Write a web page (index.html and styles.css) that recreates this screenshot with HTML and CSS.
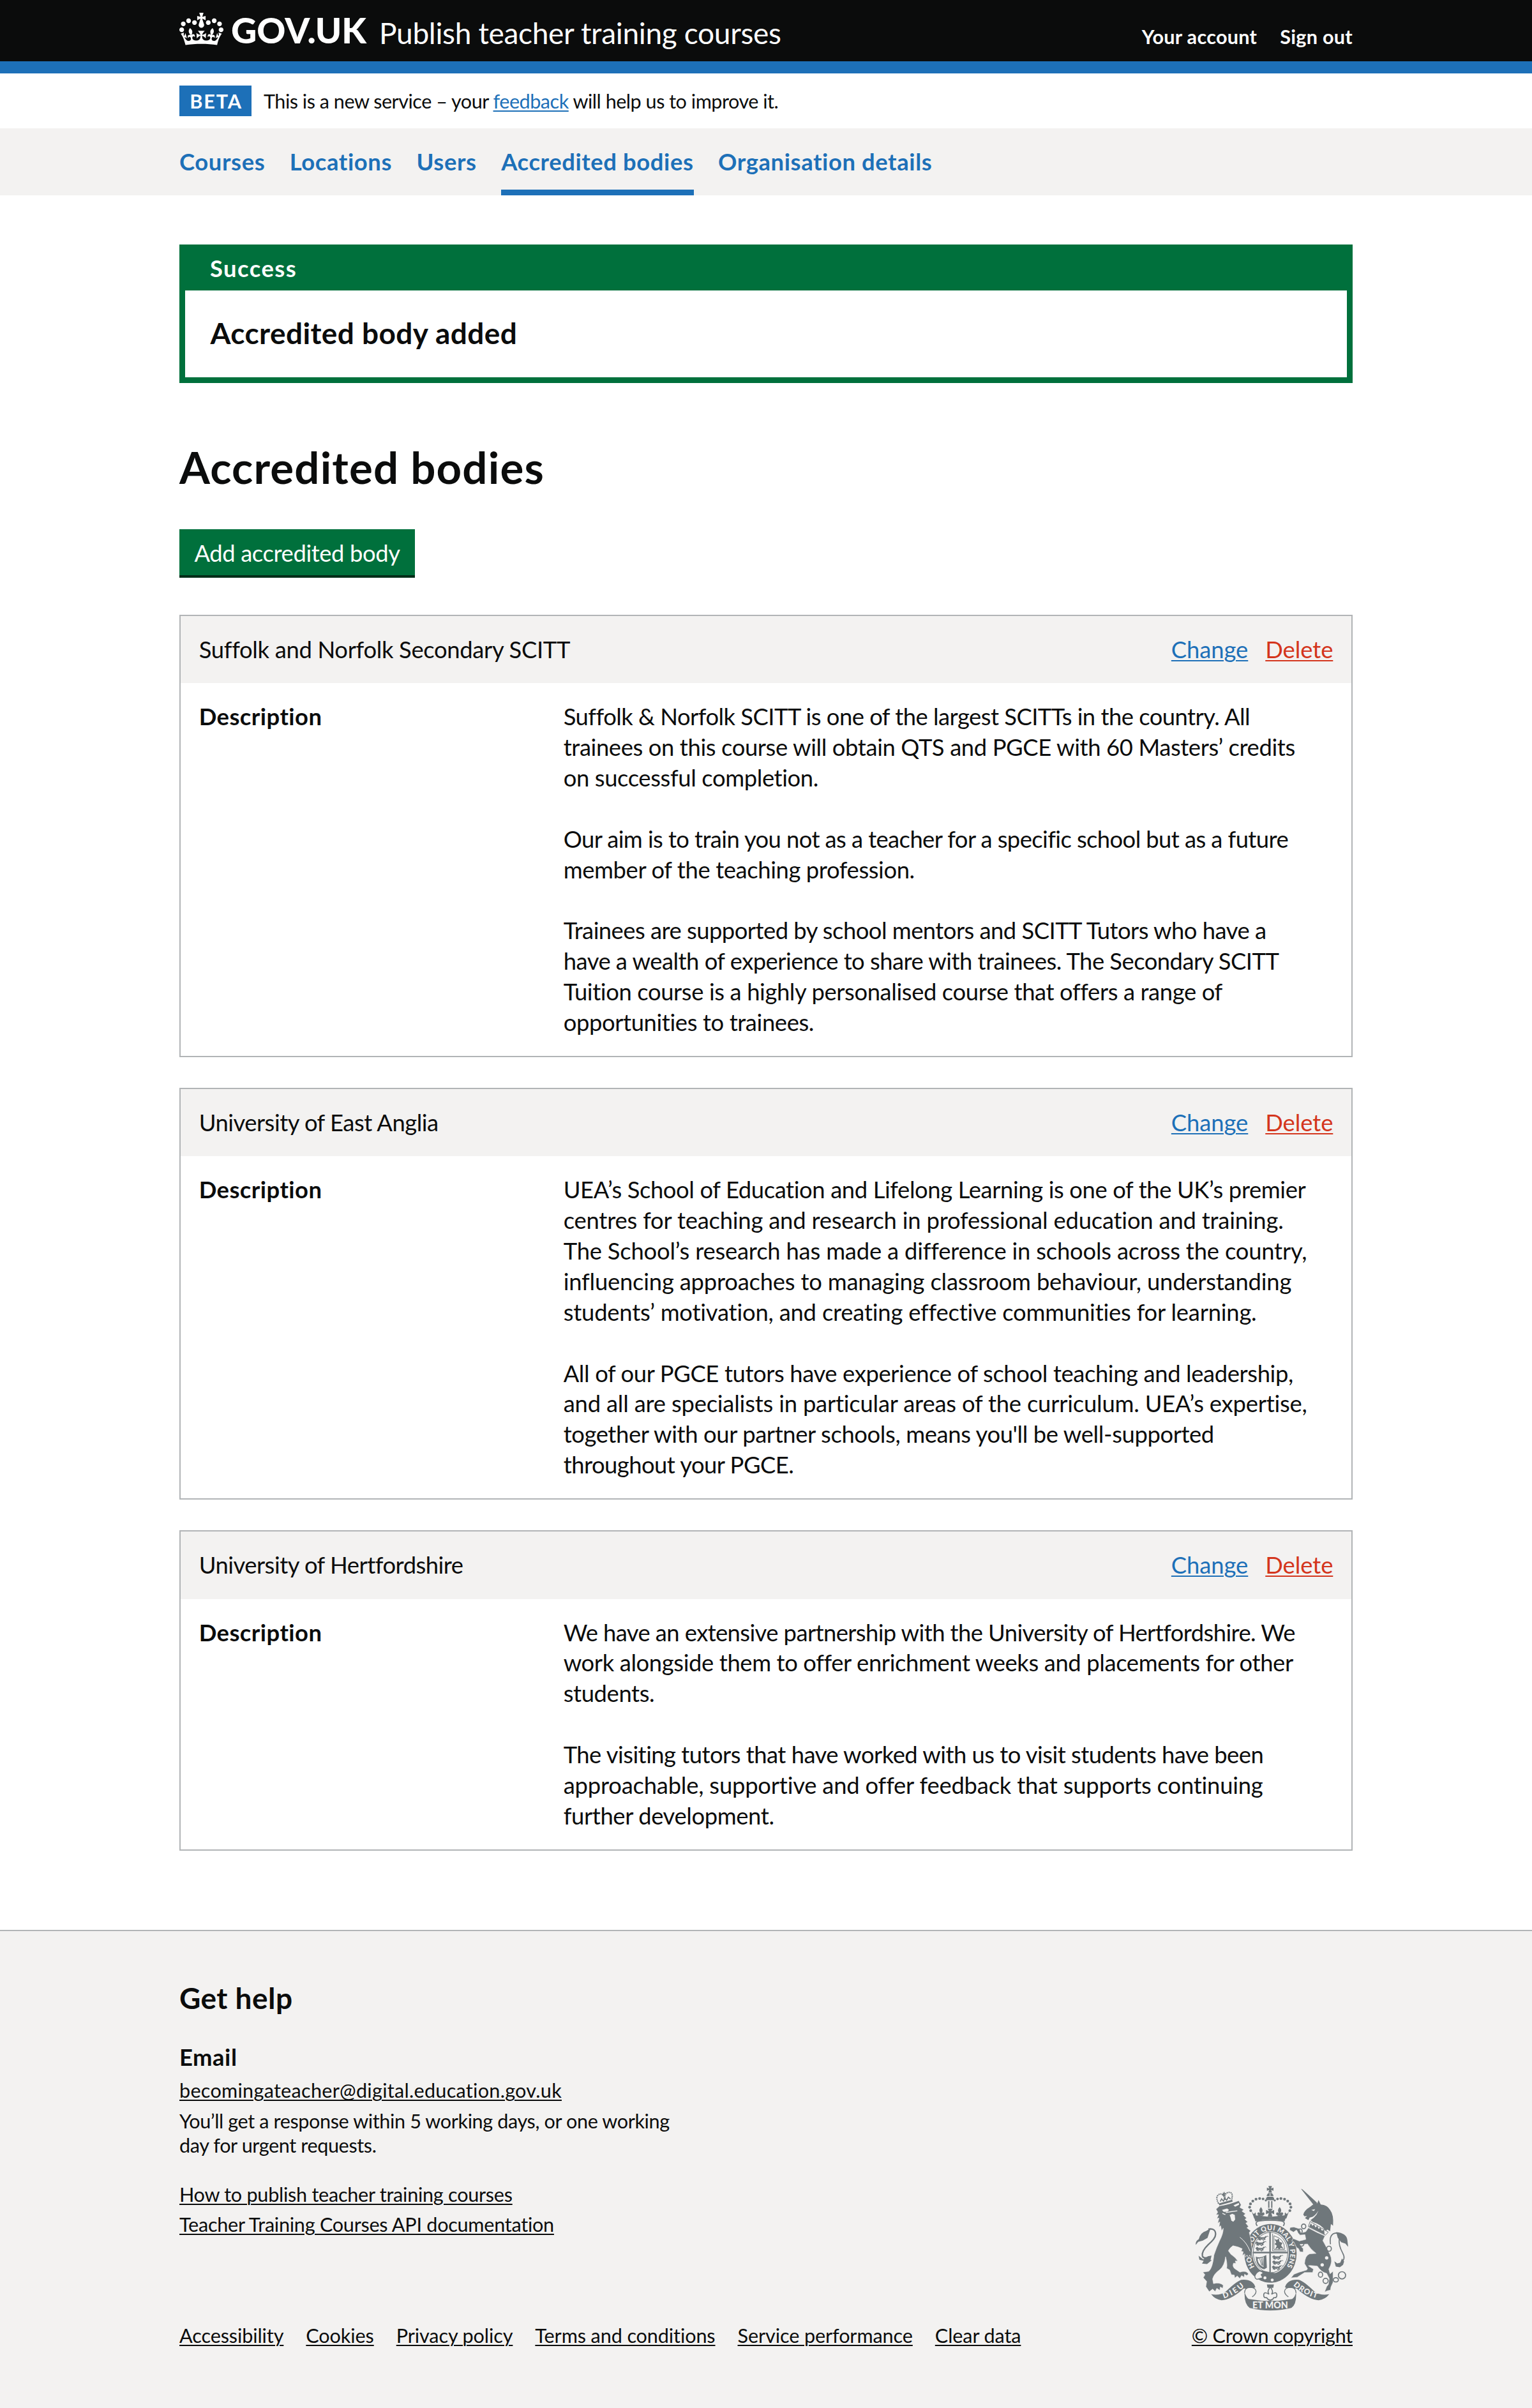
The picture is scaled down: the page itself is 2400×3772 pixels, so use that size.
FILE: index.html
```html
<!DOCTYPE html>
<html lang="en">
<head>
<meta charset="utf-8">
<title>Accredited bodies - Publish teacher training courses</title>
<link rel="stylesheet" href="styles.css">
</head>
<body>
<header class="header">
  <div class="container header-inner">
    <svg class="logo" viewBox="0 0 302 60" role="img" aria-label="GOV.UK">
      <svg x="0" y="0" width="69" height="51" viewBox="0 0 132 97" preserveAspectRatio="none">
        <path fill="#fff" fill-rule="evenodd" d="M25 30.2c3.5 1.5 7.7-.2 9.1-3.7 1.5-3.6-.2-7.8-3.9-9.2-3.6-1.4-7.6.3-9.1 3.9-1.4 3.5.3 7.5 3.9 9zM9 39.5c3.6 1.5 7.8-.2 9.2-3.7 1.5-3.6-.2-7.8-3.9-9.1-3.6-1.5-7.6.2-9.1 3.8-1.4 3.5.3 7.5 3.8 9zM4.4 57.2c3.5 1.5 7.7-.2 9.1-3.8 1.5-3.6-.2-7.7-3.9-9.1-3.5-1.5-7.6.3-9.1 3.8-1.4 3.5.3 7.6 3.9 9.1zm38.3-21.4c3.5 1.5 7.7-.2 9.1-3.8 1.5-3.6-.2-7.7-3.9-9.1-3.6-1.5-7.6.3-9.1 3.8-1.3 3.6.4 7.7 3.9 9.1zm64.4-5.6c-3.6 1.5-7.8-.2-9.1-3.7-1.5-3.6.2-7.8 3.8-9.2 3.6-1.4 7.7.3 9.2 3.9 1.3 3.5-.4 7.5-3.9 9zm15.9 9.3c-3.6 1.5-7.7-.2-9.1-3.7-1.5-3.6.2-7.8 3.7-9.1 3.6-1.5 7.7.2 9.2 3.8 1.5 3.5-.3 7.5-3.8 9zm4.7 17.7c-3.6 1.5-7.8-.2-9.2-3.8-1.5-3.6.2-7.7 3.9-9.1 3.6-1.5 7.7.3 9.2 3.8 1.3 3.5-.4 7.6-3.9 9.1zM89.3 35.8c-3.6 1.5-7.8-.2-9.2-3.8-1.4-3.6.2-7.7 3.9-9.1 3.6-1.5 7.7.3 9.2 3.8 1.4 3.6-.3 7.7-3.9 9.1zM69.7 17.7l8.9 4.7V9.3l-8.9 2.8c-.2-.3-.5-.6-.9-.9L72.4 0H59.6l3.5 11.2c-.3.3-.6.5-.9.9l-8.8-2.8v13.1l8.8-4.7c.3.3.6.7.9.9l-5 15.4v.1c-.2.8-.4 1.6-.4 2.4 0 4.1 3.1 7.5 7 8.1h.2c.3 0 .7.1 1 .1.4 0 .7 0 1-.1h.2c4-.6 7.1-4.1 7.1-8.1 0-.8-.1-1.7-.4-2.4V34l-5.1-15.4c.4-.2.7-.6 1-.9zM66 92.8c16.9 0 32.8 1.1 47.1 3.2 4-16.9 8.9-26.7 14-33.5l-9.6-3.4c1 4.9 1.1 7.2 0 10.2-1.5-1.4-3-4.3-4.2-8.7L108.6 76c2.8-2 5-3.2 7.5-3.3-4.4 9.4-10 11.9-13.6 11.2-4.3-.8-6.3-4.6-5.6-7.9 1-4.7 5.7-5.9 8-.5 4.3-8.7-3-11.4-7.6-8.8 7.1-7.2 7.9-13.5 2.1-21.1-8 6.1-8.1 12.3-4.5 20.8-4.7-5.4-12.1-2.5-9.5 6.2 3.4-5.2 7.9-2 7.2 3.1-.6 4.3-6.4 7.8-13.5 7.2-10.3-.9-10.9-8-11.2-13.8 2.5-.5 7.1 1.8 11 7.3L80.2 60c-4.1 4.4-8 5.3-12.3 5.4 1.4-4.4 8-11.6 8-11.6H55.5s6.4 7.2 7.9 11.6c-4.2-.1-8-1-12.3-5.4l1.4 16.4c3.9-5.5 8.5-7.7 10.9-7.3-.3 5.8-.9 12.8-11.1 13.8-7.2.6-12.9-2.9-13.5-7.2-.7-5 3.8-8.3 7.1-3.1 2.7-8.7-4.6-11.6-9.4-6.2 3.7-8.5 3.6-14.7-4.6-20.8-5.8 7.6-5 13.9 2.2 21.1-4.7-2.6-11.9.1-7.7 8.8 2.3-5.5 7.1-4.2 8.1.5.7 3.3-1.3 7.1-5.7 7.9-3.5.7-9-1.8-13.5-11.2 2.5.1 4.7 1.3 7.5 3.3l-4.7-15.4c-1.2 4.4-2.7 7.2-4.3 8.7-1.1-3-.9-5.3 0-10.2l-9.5 3.4c5 6.9 9.9 16.7 14 33.5 14.8-2.1 30.8-3.2 47.7-3.2z"/>
      </svg>
      <text class="logo-text" x="81" y="48" textLength="212" lengthAdjust="spacingAndGlyphs">GOV.UK</text>
    </svg>
    <a class="service-name">Publish teacher training courses</a>
    <nav class="account"><a>Your account</a><a>Sign out</a></nav>
  </div>
</header>
<div class="container phase">
  <strong class="tag">BETA</strong>
  <span class="phase-text">This is a new service – your <a class="link">feedback</a> will help us to improve it.</span>
</div>
<nav class="primary">
  <div class="container primary-list">
    <a>Courses</a><a>Locations</a><a>Users</a><a class="current">Accredited bodies</a><a>Organisation details</a>
  </div>
</nav>
<main class="container main">
  <section class="banner">
    <h2 class="banner-title">Success</h2>
    <p class="banner-content">Accredited body added</p>
  </section>
  <h1 class="heading">Accredited bodies</h1>
  <a class="button">Add accredited body</a>

  <section class="card">
    <div class="card-header"><h2>Suffolk and Norfolk Secondary SCITT</h2>
      <div class="actions"><a class="link">Change</a><a class="link warning">Delete</a></div></div>
    <dl class="card-body"><dt>Description</dt>
      <dd>
        <p>Suffolk &amp; Norfolk SCITT is one of the largest SCITTs in the country. All<br><span class="wide">trainees on this course will obtain QTS and PGCE with 60 Masters’ credits<br>on successful completion.</span></p>
        <p><span class="tight">Our aim is to train you not as a teacher for a specific school but as a future</span><br><span class="wide">member of the teaching profession.</span></p>
        <p>Trainees are supported by school mentors and SCITT Tutors who have a<br>have a wealth of experience to share with trainees. The Secondary SCITT<br><span class="wide">Tuition course is a highly personalised course that offers a range of<br>opportunities to trainees.</span></p>
      </dd></dl>
  </section>

  <section class="card">
    <div class="card-header"><h2 class="tight">University of East Anglia</h2>
      <div class="actions"><a class="link">Change</a><a class="link warning">Delete</a></div></div>
    <dl class="card-body"><dt>Description</dt>
      <dd>
        <p><span class="wide">UEA’s School of Education and Lifelong Learning is one of the UK’s premier</span><br><span class="wider">centres for teaching and research in professional education and training.<br>The School’s research has made a difference in schools across the country,<br>influencing approaches to managing classroom behaviour, understanding<br>students’ motivation, and creating effective communities for learning.</span></p>
        <p><span class="wide">All of our PGCE tutors have experience of school teaching and leadership,</span><br><span class="wider">and all are specialists in particular areas of the curriculum. UEA’s expertise,</span><br><span class="wide">together with our partner schools, means you'll be well-supported</span><br>throughout your PGCE.</p>
      </dd></dl>
  </section>

  <section class="card">
    <div class="card-header"><h2 class="tight">University of Hertfordshire</h2>
      <div class="actions"><a class="link">Change</a><a class="link warning">Delete</a></div></div>
    <dl class="card-body"><dt>Description</dt>
      <dd>
        <p><span class="tight">We have an extensive partnership with the University of Hertfordshire. We</span><br><span class="wide">work alongside them to offer enrichment weeks and placements for other<br>students.</span></p>
        <p>The visiting tutors that have worked with us to visit students have been<br><span class="wider">approachable, supportive and offer feedback that supports continuing</span><br><span class="wide">further development.</span></p>
      </dd></dl>
  </section>
</main>
<footer class="footer">
  <div class="container footer-inner">
    <div class="footer-main">
      <h2 class="footer-heading">Get help</h2>
      <h3 class="footer-subheading">Email</h3>
      <a class="link email">becomingateacher@digital.education.gov.uk</a>
      <p class="footer-note">You’ll get a response within 5 working days, or one working<br>day for urgent requests.</p>
      <a class="link footer-link">How to publish teacher training courses</a>
      <a class="link footer-link">Teacher Training Courses API documentation</a>
      <div class="meta"><a class="link">Accessibility</a><a class="link">Cookies</a><a class="link">Privacy policy</a><a class="link">Terms and conditions</a><a class="link">Service performance</a><a class="link">Clear data</a></div>
    </div>
    <div class="copyright">
      <svg class="crest" viewBox="72 68 720 590" aria-hidden="true">
        <defs>
          <path id="garter" d="M349 452A93 109 0 1 1 499 452"/>
          <path id="scroll-left" d="M205 600Q258 584 302 542"/>
          <path id="scroll-right" d="M530 538Q582 584 646 600"/>
          <g id="lion-small"><path d="M2 8l8-5 6 5h18l6-6 5 3-5 7-4 1 5 6h-7l-5-4H17l-5 6H5l4-7-7-1z"/><path d="M6 14l8 7 8-6 8 7 8-7" fill="none" stroke="#6f777b" stroke-width="4"/><path d="M40 10q8-12 12-4" fill="none" stroke="#6f777b" stroke-width="3"/></g>
          <g id="crown-half">
            <circle cx="331" cy="187" r="6.5"/><circle cx="326" cy="171" r="6.5"/><circle cx="330" cy="155" r="6.5"/><circle cx="341" cy="142" r="6.5"/><circle cx="356" cy="133" r="6.5"/><circle cx="373" cy="130" r="6.5"/><circle cx="389" cy="132" r="6"/><circle cx="402" cy="139" r="5"/>
            <path d="M379 170q-13 15-3 28-13-8-14 6 9 10 17 6 10 4 17-6-1-14-13-6 9-13-4-28z"/>
            <path d="M335 190l8 12q8 0 9-8 8 12-2 20l10 3-12 8z"/>
          </g>
        </defs>
        <g fill="#6f777b">
          <!-- central crown -->
          <path d="M414 71h17l-4 12 11-4v15l-11-4 4 12h-17l4-12-11 4V79l11 4z"/>
          <circle cx="422" cy="119" r="16"/><path d="M405 120h35M422 104v15" stroke="#f3f2f1" stroke-width="3"/><path d="M403 126h38v12h-38z"/>
          <path d="M413 142h6v32h-6zM427 142h6v32h-6zM411 178h24l-8 12 14-6v20l-13-6 5 18h-22l5-18-13 6v-20l14 6z"/>
          <use href="#crown-half"/><use href="#crown-half" transform="matrix(-1 0 0 1 846 0)"/>
          <path d="M342 202q14 12 28 6 22 9 52 7 30 2 52-7 14 6 28-6l-12 36q-68-18-137 0z"/>
          <path d="M362 259q-16-20 12-24 48-6 98 0 26 4 12 24" fill="none" stroke="#6f777b" stroke-width="5"/>
          <!-- garter and shield -->
          <ellipse cx="424" cy="388" rx="123" ry="138"/>
          <ellipse cx="424" cy="384" rx="86" ry="100" fill="#f3f2f1"/>
          <ellipse cx="424" cy="384" rx="81" ry="95" fill="none" stroke="#6f777b" stroke-width="3"/>
          <path d="M422 287v190M341 384h164" fill="none" stroke="#6f777b" stroke-width="7"/>
          <path d="M434 296v80h64M440 305q52 15 50 64h-50z" fill="none" stroke="#6f777b" stroke-width="3"/>
          <use href="#lion-small" x="361" y="304"/><use href="#lion-small" x="352" y="329"/><use href="#lion-small" x="352" y="354"/>
          <use href="#lion-small" x="431" y="394"/><use href="#lion-small" x="431" y="418"/><use href="#lion-small" x="429" y="442"/>
          <path d="M446 368l8-16-11-8 8-8-8-15 12 4 8-8 3 16 14 6-6 12 12 16-14-5-8 10-5-10z"/>
          <path d="M355 403q18 10 49-8l3 60-13 8q-38-10-39-60zm8 10q2 28 28 39l2-48q-13 8-30 9z" fill-rule="evenodd"/>
          <path d="M373 413l10 31M381 411l6 35M388 407l2 40" stroke="#6f777b" stroke-width="3"/>
          <path d="M345 475l20-10 112 22-45 38-60-14z"/>
          <path d="M352 490q20-32 38-10l-10 8 8 14-28 8q-13-6-8-20z" fill="#f3f2f1" stroke="#6f777b" stroke-width="4"/>
          <circle cx="398" cy="503" r="7" fill="#f3f2f1"/><circle cx="432" cy="513" r="7" fill="#f3f2f1"/>
          <text class="crest-text garter-text"><textPath href="#garter" textLength="470">HONI SOIT QUI MAL Y PENSE</textPath></text>
          <!-- lion -->
          <path d="M168 180L184 165Q230 158 275 140L286 160 280 172 298 182 290 190 307 202 298 209 312 222 304 228 317 240 308 246 321 262 313 268 331 282 324 290Q335 322 334 350L338 372 334 408 326 396 320 410 314 396 306 406 303 390 292 398 296 380 286 378 291 366 272 358 248 352Q232 362 226 376L238 392Q262 408 270 424L258 424 262 434 250 434Q244 448 254 458L280 476Q310 466 321 485L312 492 302 486 300 500 288 492 280 506 268 494 256 504 254 490 240 488 232 466 218 458Q222 436 213 404Q208 446 186 464Q158 484 152 508L156 530Q186 522 202 538L200 552 188 546 186 562 172 552 164 567 152 556 136 568 120 544 124 520 108 502 116 488 106 476 134 472Q152 456 158 396Q170 360 184 330Q202 296 202 270L194 282 190 258 182 264 186 240 176 246 182 222 172 224 180 206 168 206 176 194Z" stroke="#f3f2f1" stroke-width="2"/>
          <path d="M196 184l24-7 9 7-8 8-17 1zM250 162l25-11 2 8-19 10zM232 208l12-6 12 5 2 22-9 10-9-5-4-16z" fill="#f3f2f1"/>
          <path d="M198 200l14 6M214 196l24-4 30-4" fill="none" stroke="#f3f2f1" stroke-width="4"/>
          <path d="M280 312q32 24 48 66" fill="none" stroke="#f3f2f1" stroke-width="3"/>
          <path d="M180 154l64-18 2 9-62 17zM196 100l6 5 5-8 2 8 6 1-6 6 1 8-9-2-6-7 6-5z"/>
          <path d="M188 144l6-12 9 10 6-14 9 10 8-14 10 8" fill="none" stroke="#6f777b" stroke-width="5"/>
          <path d="M180 154q-14-28-4-38 14-16 28 2l6 18q-2-28 10-33 26-8 24 18l-2 15" fill="none" stroke="#6f777b" stroke-width="6" stroke-dasharray="6 3"/>
          <path d="M73 348q-3-17 14-27 8-32 36-39l20-13-6 18-9 28-22 13-22 6z"/>
          <path d="M132 274q34-6 34 24 0 20-34 48-33 32-28 54 4 13 26 8" fill="none" stroke="#6f777b" stroke-width="7"/>
          <path d="M86 399l22 17 22-15 17-3-5 21 6 1-22 18-24-2 8-13-20-5z"/>
          <!-- unicorn -->
          <path d="M567 84L575 88 643 150 631 166Z"/>
          <path d="M578 206Q582 186 612 168Q628 152 644 152L650 137 660 158Q692 160 704 184Q722 206 718 258L708 250 704 284 692 276 682 282Q664 252 622 240L612 232Q628 222 640 206L650 186Q636 208 622 216L608 220 602 232 586 222 596 212 584 214Z"/>
          <path d="M616 184l18-4-6 9z" fill="#f3f2f1"/>
          <path d="M610 238L696 288 682 302 602 262Z" fill="#f3f2f1" stroke="#6f777b" stroke-width="3"/>
          <path d="M608 258l6-12 7 13 8-8 6 15 9-8 6 15 9-7 6 15 11-4 2 22-72-36z"/>
          <path d="M602 268Q640 290 680 306L670 328Q684 352 704 394Q720 424 698 462L704 484 718 472V524L708 546 706 560 690 564 678 570 688 544 696 534 700 506 688 482Q664 478 644 448L626 446Q606 444 602 446L626 462 622 478 584 478 550 500 520 503 534 486 560 476 594 466 598 460 584 436Q586 398 608 390L638 388Q610 366 598 344L560 346 578 366V382L562 380 556 366 546 360 534 334 524 330 530 318 560 330 590 322 586 300 562 302 546 278 532 288 514 278 516 266 534 264 560 272 568 292 590 286Z" stroke="#f3f2f1" stroke-width="2"/>
          <g fill="none" stroke="#6f777b" stroke-width="5">
            <path d="M706 345q-8-50 27-53 20 3 14 30-4 26 16 64 17 30-9 45"/>
            <ellipse cx="580" cy="261" rx="10" ry="11"/><ellipse cx="564" cy="284" rx="9" ry="11"/><ellipse cx="570" cy="343" rx="11" ry="11"/><ellipse cx="699" cy="366" rx="11" ry="12"/><ellipse cx="659" cy="488" rx="10" ry="12"/><circle cx="683" cy="517" r="12"/><ellipse cx="731" cy="512" rx="12" ry="10"/><circle cx="760" cy="491" r="17"/>
          </g>
          <circle cx="688" cy="409" r="8" fill="#f3f2f1"/><circle cx="667" cy="442" r="8" fill="#f3f2f1"/>
          <path d="M789 357l-13-15-20-7-16-21-7-26q48 5 52 36zM724 425l14 10 14-4 8-19 10 14-5 16-15 11-19-3z"/>
          <!-- motto scroll and fleur-de-lis -->
          <path d="M145 580q42 8 70-14 50-48 72-54 54-5 66 35l-36 20q-12-24-27-7-55 46-95 48-30-2-50-28zM700 580q-42 8-70-14-50-48-72-54-54-5-66 35l36 20q12-24 27-7 55 46 95 48 30-2 50-28z"/>
          <path d="M302 570q10 28 20 32 100 18 204 0 14-8 18-34 4 60-22 76-100 24-196 0-26-18-24-74z"/>
          <path d="M302 574q0-24 24-26 28 0 30 18 0 14-18 26M544 574q0-24-24-26-28 0-30 18 0 14 18 26" fill="#f3f2f1" stroke="#6f777b" stroke-width="4"/>
          <path d="M407 534h33l-3 16h-27z"/>
          <path d="M423 546q17 20 6 34 24-16 25 4 0 14-14 12-5 10-17 12-12-2-17-12-14 2-14-12 1-20 25-4-11-14 6-34z" fill="#f3f2f1" stroke="#6f777b" stroke-width="5"/>
          <text class="crest-text"><textPath href="#scroll-left" textLength="112">DIEU</textPath></text>
          <text class="crest-text"><textPath href="#scroll-right" textLength="128">DROIT</textPath></text>
          <text class="crest-text et-mon" x="339" y="646" textLength="167" lengthAdjust="spacingAndGlyphs">ET MON</text>
        </g>
      </svg>
      <a class="link">© Crown copyright</a>
    </div>
  </div>
</footer>
</body>
</html>
```
FILE: styles.css
```css
* { box-sizing: border-box; }
body { margin: 0; background: #fff; color: #0b0c0c; font: 400 36.4px/47.87px Lato, "Noto Sans", sans-serif; letter-spacing: -0.0145em; }
h1, h2, h3, p, dl, dd { margin: 0; }
strong, h1, h3, dt { font-weight: 700; }
.container { width: 1838px; margin: 0 auto; white-space: nowrap; }
.link { color: #1d70b8; text-decoration: underline; text-decoration-thickness: 2px; text-underline-offset: 3px; }
.link.warning { color: #d4351c; }
.tight { letter-spacing: -0.0165em; }
.wide { letter-spacing: -0.0108em; }
.wider { letter-spacing: -0.0058em; }

.header { height: 115px; background: #0b0c0c; border-bottom: 19px solid #1d70b8; color: #fff; }
.header-inner { display: flex; align-items: flex-start; }
.logo { width: 302px; height: 60px; margin-top: 20px; }
.logo-text { font: 900 56px Lato, sans-serif; fill: #fff; letter-spacing: 0; }
.service-name { margin: 29px 0 0 11px; font-size: 46px; line-height: 46px; letter-spacing: -0.007em; }
.account { display: flex; gap: 36px; margin: 39px 0 0 auto; font-size: 30.6px; line-height: 38px; font-weight: 700; letter-spacing: 0.009em; }

.phase { display: flex; height: 86px; padding-top: 19px; font-size: 30.6px; line-height: 38px; }
.tag { width: 113px; height: 48px; padding-left: 2px; background: #1d70b8; color: #fff; line-height: 49px; text-align: center; letter-spacing: 0.06em; }
.phase-text { margin: 6px 0 0 19px; letter-spacing: -0.0162em; }

.primary { height: 105px; background: #f3f2f1; }
.primary-list { display: flex; gap: 38.5px; font-weight: 700; letter-spacing: 0.0165em; color: #1d70b8; }
.primary-list a { height: 105px; padding-top: 29px; }
.primary-list .current { border-bottom: 9.6px solid #1d70b8; }

.main { padding-top: 77px; padding-bottom: 124.5px; }
.banner { border: 9.6px solid #00703c; border-top: 0; height: 216.6px; }
.banner-title { height: 72px; padding: 13.5px 39px 0; background: #00703c; color: #fff; font-size: 36.4px; font-weight: 700; letter-spacing: 0.04em; }
.banner-content { padding: 38px 39.5px 0; font-size: 46px; line-height: 57.4px; font-weight: 700; letter-spacing: 0.009em; }
.heading { margin-top: 94.4px; font-size: 69px; line-height: 76.6px; letter-spacing: 0.017em; }
.button { display: block; width: 369px; height: 72.5px; margin-top: 58.4px; padding-top: 14px; background: #00703c; box-shadow: 0 4px 0 #002d18; color: #fff; text-align: center; letter-spacing: -0.011em; }

.card { margin-top: 47.9px; border: 2px solid #b1b4b6; }
.button + .card { margin-top: 61.5px; }
.card-header { display: flex; justify-content: space-between; height: 105.3px; padding: 29px 28.7px 0; background: #f3f2f1; }
.card-header h2 { font-size: 36.4px; font-weight: 400; letter-spacing: -0.009em; }
.card-header h2.tight { letter-spacing: -0.0135em; }
.actions { display: flex; gap: 27px; letter-spacing: -0.002em; }
.card-body { display: grid; grid-template-columns: 571px 1fr; padding: 29px 28.7px 28.3px; }
.card-body dt { letter-spacing: 0.012em; }
.card-body p + p { margin-top: 47.87px; }

.footer { background: #f3f2f1; border-top: 2px solid #b1b4b6; font-size: 30.6px; line-height: 38.3px; letter-spacing: -0.0085em; }
.footer .link { color: #0b0c0c; }
.footer-inner { display: flex; justify-content: space-between; align-items: flex-end; padding: 76px 0 95px; }
.footer-main { display: flex; flex-direction: column; align-items: flex-start; }
.footer-heading { font-size: 46px; line-height: 57.4px; letter-spacing: 0.01em; }
.footer-subheading { margin: 40px 0 9.5px; font-size: 36.4px; line-height: 47.9px; letter-spacing: 0.015em; }
.email { letter-spacing: 0.009em; }
.footer-note { margin: 9.2px 0 29.2px; letter-spacing: -0.0125em; }
.footer-link { margin-top: 9.2px; }
.meta { display: flex; gap: 35px; margin-top: 135.7px; letter-spacing: -0.0035em; }
.copyright { display: flex; flex-direction: column; align-items: center; gap: 20px; }
.crest { display: block; width: 240px; height: 197px; }
.crest-text { font: 900 36px Lato, sans-serif; fill: #f3f2f1; letter-spacing: 0; }
.crest-text.et-mon { font-size: 45px; }
.crest-text.garter-text { font-size: 32px; }
```
